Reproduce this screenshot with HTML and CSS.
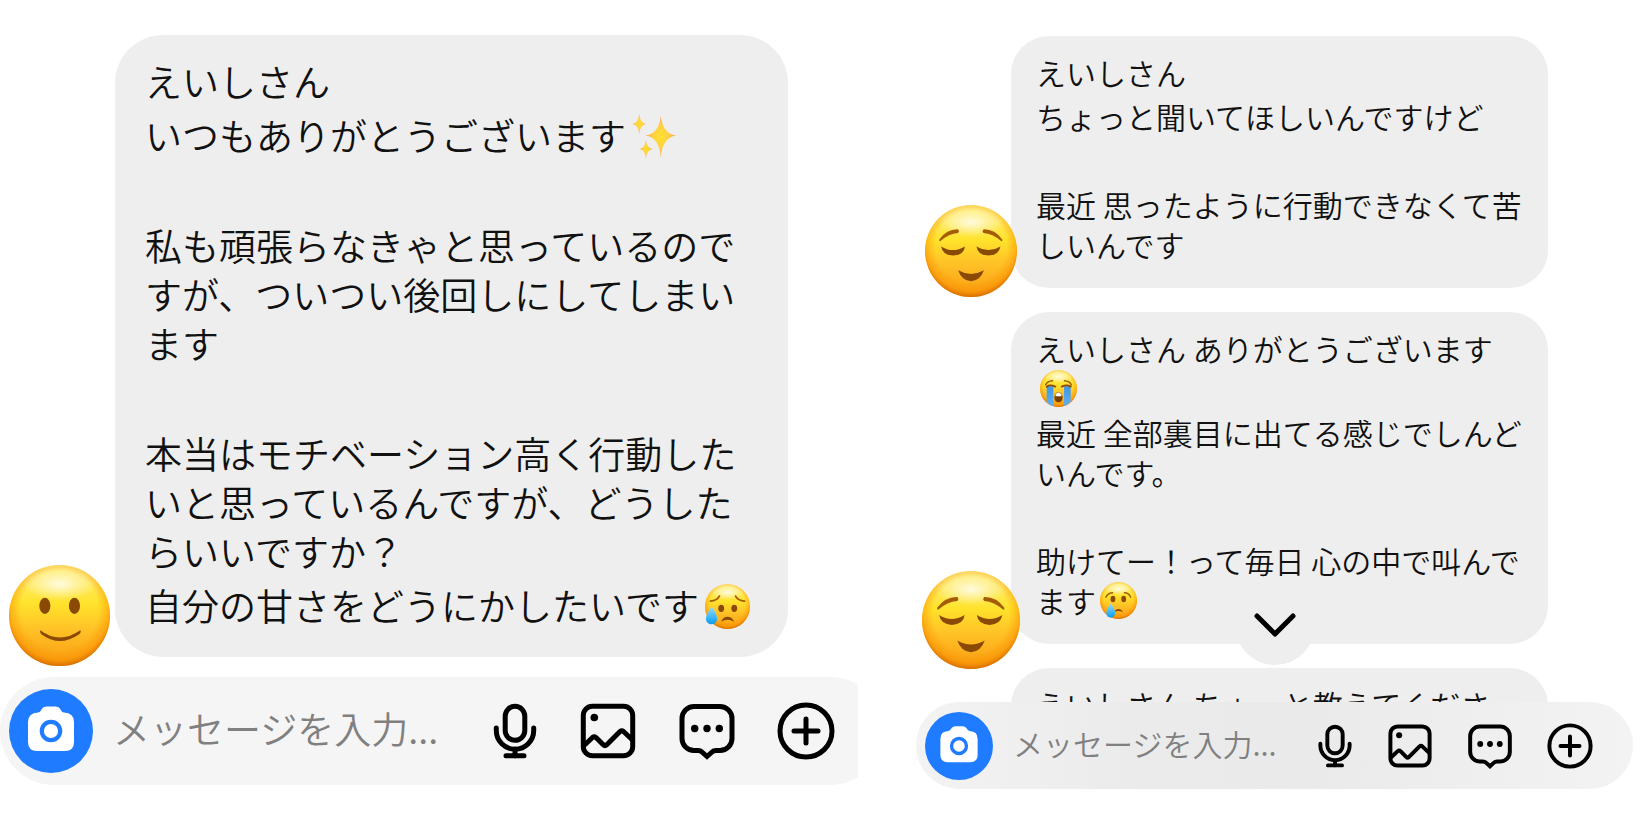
FILE: index.html
```html
<!DOCTYPE html>
<html lang="ja">
<head>
    <meta charset="UTF-8">
    <meta name="viewport" content="width=device-width, initial-scale=1.0">
    <title>メッセージ</title>
    <link rel="stylesheet" href="styles.css">
</head>
<body>
    <!-- shared icons -->
    <svg class="defs" aria-hidden="true">
        <defs>
            <linearGradient id="faceFill" x1="0" y1="0" x2="0" y2="1">
                <stop offset="0" stop-color="#fff08a"/>
                <stop offset="0.38" stop-color="#ffe32c"/>
                <stop offset="0.65" stop-color="#ffc026"/>
                <stop offset="1" stop-color="#f99c10"/>
            </linearGradient>
            <radialGradient id="faceEdge" cx="0.5" cy="0.45" r="0.55">
                <stop offset="0.7" stop-color="#fb9400" stop-opacity="0"/>
                <stop offset="0.88" stop-color="#fb9000" stop-opacity="0.5"/>
                <stop offset="1" stop-color="#d46c00" stop-opacity="0.95"/>
            </radialGradient>
            <radialGradient id="faceShine">
                <stop offset="0" stop-color="#fff" stop-opacity="0.8"/>
                <stop offset="1" stop-color="#fff" stop-opacity="0"/>
            </radialGradient>
            <linearGradient id="tear" x1="0" y1="0" x2="0" y2="1">
                <stop offset="0" stop-color="#8fe0ff"/>
                <stop offset="1" stop-color="#0a9cf0"/>
            </linearGradient>
            <linearGradient id="stream" x1="0" y1="0" x2="0" y2="1">
                <stop offset="0" stop-color="#3f97e6"/>
                <stop offset="1" stop-color="#5fb2f5"/>
            </linearGradient>
            <radialGradient id="starFill">
                <stop offset="0" stop-color="#ffe12e"/>
                <stop offset="0.5" stop-color="#ffd044"/>
                <stop offset="1" stop-color="#f9a75a"/>
            </radialGradient>
        </defs>
        <symbol id="face" viewBox="0 0 100 100">
            <circle cx="50" cy="50" r="50" fill="url(#faceFill)"/>
            <circle cx="50" cy="50" r="50" fill="url(#faceEdge)"/>
            <ellipse cx="50" cy="19" rx="36" ry="16" fill="url(#faceShine)"/>
        </symbol>
        <symbol id="smile" viewBox="0 0 100 100">
            <use href="#face"/>
            <ellipse cx="35.5" cy="40.5" rx="5.5" ry="8" fill="#8a4a06"/>
            <ellipse cx="64.8" cy="40.5" rx="5.5" ry="8" fill="#8a4a06"/>
            <path d="M31 64.5Q50 79 70.5 64.5Q72 66 69.500 68.500Q50 82 32 68.500Q30 66 31 64.500z" fill="#8a4a06"/>
        </symbol>
        <symbol id="relieved" viewBox="0 0 100 100">
            <use href="#face"/>
            <path d="M15.500 37.500Q24 26 36 26.500Q38 28.500 36 30.500Q26 31 16.500 39.500Q15 39.500 15.500 37.500zM84 37.500Q75.500 26 63.500 26.500Q61.500 28.500 63.500 30.500Q73.500 31 83 39.500Q84.500 39.500 84 37.500z" fill="#a45c08"/>
            <path d="M17.500 45Q30 53 43.500 45Q42.500 54.500 30.500 55Q19 54.500 17.500 45zM56 45Q69 53 82 45Q80.500 54.500 69 55Q57 54.500 56 45z" fill="#8a4a06"/>
            <path d="M36 71Q50 79 64 71Q60 82.500 50 83Q40 82.500 36 71z" fill="#8a4a06"/>
        </symbol>
        <symbol id="sadRelieved" viewBox="0 0 100 100">
            <use href="#face"/>
            <path d="M12 38Q27 37 32 27M68 27Q73 37 88 38" fill="none" stroke="#a45c08" stroke-width="4" stroke-linecap="round"/>
            <ellipse cx="36" cy="54" rx="6.500" ry="8" fill="#8a4a06"/>
            <ellipse cx="65" cy="54" rx="6.500" ry="8" fill="#8a4a06"/>
            <path d="M36 84Q40 73 50 73Q60 73 65 84Q50 75 36 84z" fill="#8a4a06"/>
            <path d="M15 50Q27 68 27 77A12.500 12.500 0 0 1 2 77Q2 68 15 50z" fill="url(#tear)"/>
        </symbol>
        <symbol id="cry" viewBox="0 0 100 100">
            <use href="#face"/>
            <path d="M16 41Q22 29 34 29M66 29Q78 29 83 41" fill="none" stroke="#a45c08" stroke-width="4" stroke-linecap="round"/>
            <ellipse cx="35" cy="46" rx="6.500" ry="9" fill="#8a4a06"/>
            <ellipse cx="64" cy="46" rx="6.500" ry="9" fill="#8a4a06"/>
            <path d="M38 82Q42 73 50 73Q58 73 62 82Q50 75 38 82z" fill="#8a4a06"/>
            <path d="M29 58Q41 75 41 84A12 12 0 0 1 17 84Q17 75 29 58z" fill="url(#tear)"/>
        </symbol>
        <symbol id="sob" viewBox="0 0 100 100">
            <use href="#face"/>
            <path d="M18 44H36V98Q26 94 18 87zM65 44H83V86Q76 93 65 97z" fill="url(#stream)"/>
            <path d="M15 40Q20 30 34 29M66 29Q80 30 85 40" fill="none" stroke="#a45c08" stroke-width="4" stroke-linecap="round"/>
            <path d="M18 45Q28 38 41 45M59 45Q72 38 83 45" fill="none" stroke="#8a4a06" stroke-width="5" stroke-linecap="round"/>
            <path d="M50 60C57 60 61 66 61 74C61 82 57 87 50 87S39 82 39 74C39 66 43 60 50 60z" fill="#7a3f04"/>
            <path d="M42 66Q50 56 58 66V71H42z" fill="#fff"/>
        </symbol>
        <symbol id="sparkles" viewBox="0 0 100 100">
            <path d="M64 3Q67 43 98 48Q67 53 64 97Q61 53 30 48Q61 43 64 3z" fill="url(#starFill)"/>
            <path d="M16 0Q18 20 31 22Q18 24 16 44Q14 24 1 22Q14 20 16 0z" fill="url(#starFill)"/>
            <path d="M31 58Q33 76 46 78Q33 80 31 99Q29 80 17 78Q29 76 31 58z" fill="url(#starFill)"/>
        </symbol>
        <symbol id="camera" viewBox="0 0 84 84">
            <path d="M29 23.500Q31.500 23 32.500 20.500Q34 17.500 38 17.500H46Q50 17.500 51.500 20.500Q52.500 23 55 23.500Q65 24 65 33V53Q65 62 56 62H28Q19 62 19 53V33Q19 24 29 23.500z" fill="#fff"/>
            <circle cx="42" cy="42" r="9.200" fill="none" stroke="#1f7bff" stroke-width="4.200"/>
        </symbol>
        <symbol id="mic" viewBox="0 0 46 58">
            <g fill="none" stroke="#000" stroke-width="5" stroke-linecap="round">
                <rect x="13.200" y="4.300" width="19.600" height="34" rx="9.800"/>
                <path d="M4.300 26v2.500a18.700 18.700 0 0 0 37.400 0V26M23 47v7M14 53.800h18"/>
            </g>
        </symbol>
        <symbol id="image" viewBox="0 0 58 58">
            <g fill="none" stroke="#000" stroke-width="5" stroke-linejoin="round">
                <rect x="4.300" y="4.300" width="49.400" height="49.400" rx="9"/>
                <path d="M5 43.500L13.500 35.500Q15.300 34 17 35.500L24.500 43Q26 44.500 27.500 43L41 29.500Q42.700 28 44.500 29.500L53.500 38"/>
            </g>
            <circle cx="15.300" cy="15.500" r="3.800"/>
        </symbol>
        <symbol id="chat" viewBox="0 0 58 58">
            <path d="M16 4.500H42A12 12 0 0 1 54 16.500V36.500A12 12 0 0 1 42 48.500H38Q35.500 48.500 34 50L29 54.500L24 50Q22.500 48.500 20 48.500H16A12 12 0 0 1 4 36.500V16.500A12 12 0 0 1 16 4.500z" fill="none" stroke="#000" stroke-width="5"/>
            <circle cx="16.700" cy="26.500" r="3.700"/>
            <circle cx="29" cy="26.500" r="3.700"/>
            <circle cx="41.300" cy="26.500" r="3.700"/>
        </symbol>
        <symbol id="plus" viewBox="0 0 58 58">
            <g fill="none" stroke="#000" stroke-width="5" stroke-linecap="round">
                <circle cx="29" cy="29" r="26"/>
                <path d="M29 17v24M17 29h24"/>
            </g>
        </symbol>
    </svg>

    <main class="screens">
        <section class="screen screen-large">
            <div class="message">
                <div class="avatar"><svg class="avatar-face" role="img" aria-label="🙂"><use href="#smile"/></svg></div>
                <div class="bubble">
                    <p>えいしさん</p>
                    <p>いつもありがとうございます<svg class="emoji" role="img" aria-label="✨"><use href="#sparkles"/></svg></p>
                    <p class="spaced">私も頑張らなきゃと思っているのですが、ついつい後回しにしてしまいます</p>
                    <p class="spaced">本当はモチベーション高く行動したいと思っているんですが、どうしたらいいですか？</p>
                    <p>自分の甘さをどうにかしたいです<svg class="emoji" role="img" aria-label="😥"><use href="#sadRelieved"/></svg></p>
                </div>
            </div>
            <form class="composer">
                <button type="button" class="camera" aria-label="カメラ"><svg><use href="#camera"/></svg></button>
                <input type="text" class="message-input" placeholder="メッセージを入力..." aria-label="メッセージを入力">
                <div class="tools">
                    <button type="button" class="tool tool-mic" aria-label="音声"><svg><use href="#mic"/></svg></button>
                    <button type="button" class="tool" aria-label="画像"><svg><use href="#image"/></svg></button>
                    <button type="button" class="tool" aria-label="返信"><svg><use href="#chat"/></svg></button>
                    <button type="button" class="tool" aria-label="追加"><svg><use href="#plus"/></svg></button>
                </div>
            </form>
        </section>

        <section class="screen screen-small">
            <div class="message">
                <div class="avatar"><svg class="avatar-face" role="img" aria-label="😌"><use href="#relieved"/></svg></div>
                <div class="bubble">
                    <p>えいしさん</p>
                    <p>ちょっと聞いてほしいんですけど</p>
                    <p class="spaced">最近 思ったように行動できなくて苦しいんです</p>
                </div>
            </div>
            <div class="message">
                <div class="avatar avatar-low"><svg class="avatar-face" role="img" aria-label="😌"><use href="#relieved"/></svg></div>
                <div class="bubble">
                    <p>えいしさん ありがとうございます<svg class="emoji" role="img" aria-label="😭"><use href="#sob"/></svg></p>
                    <p>最近 全部裏目に出てる感じでしんどいんです。</p>
                    <p class="spaced">助けてー！って毎日 心の中で叫んでます<svg class="emoji" role="img" aria-label="😢"><use href="#cry"/></svg></p>
                </div>
            </div>
            <!-- next message, cut off by the input bar -->
            <div class="message message-cut">
                <div class="avatar"></div>
                <div class="bubble">
                    <p>えいしさん ちょっと教えてくださ</p>
                </div>
            </div>
            <form class="composer">
                <button type="button" class="scroll-down" aria-label="最新へ">
                    <svg viewBox="0 0 80 80"><path d="M22 31L40 49L58 31" fill="none" stroke="#000" stroke-width="5" stroke-linecap="round" stroke-linejoin="round"/></svg>
                </button>
                <button type="button" class="camera" aria-label="カメラ"><svg><use href="#camera"/></svg></button>
                <input type="text" class="message-input" placeholder="メッセージを入力..." aria-label="メッセージを入力">
                <div class="tools">
                    <button type="button" class="tool tool-mic" aria-label="音声"><svg><use href="#mic"/></svg></button>
                    <button type="button" class="tool" aria-label="画像"><svg><use href="#image"/></svg></button>
                    <button type="button" class="tool" aria-label="返信"><svg><use href="#chat"/></svg></button>
                    <button type="button" class="tool" aria-label="追加"><svg><use href="#plus"/></svg></button>
                </div>
            </form>
        </section>
    </main>
</body>
</html>
```

FILE: styles.css
```css
body {
    margin: 0;
    background-color: #fff;
    color: #111;
    font-family: "Noto Sans CJK JP", sans-serif;
    font-weight: 350;
}

.defs {
    position: absolute;
    width: 0;
    height: 0;
}

.screens {
    display: grid;
    grid-template-columns: 52fr 48fr;
    align-items: start;
}

/* Sizes for the two screens */
.screen {
    box-sizing: border-box;
    min-width: 0;
    overflow: hidden;
    font-size: var(--text);
    line-height: var(--line);
}

.screen-large {
    --text: 37px;
    --line: 49px;
    --line-gap: 5px;
    --para-gap: 61px;
    --emoji: 45px;
    --face: 101px;
    --camera: 84px;
    --icon: 58px;
    --mic: 46px;
    padding: 35px 0;
}

.screen-small {
    --text: 30px;
    --line: 40px;
    --line-gap: 4px;
    --para-gap: 48px;
    --emoji: 37px;
    --face: 92px;
    --camera: 68px;
    --icon: 46px;
    --mic: 36px;
    padding: 36px 0;
}

/* Messages */
.message {
    display: flex;
    align-items: flex-end;
}

.screen-large .message {
    padding: 0 70px 0 9px;
    margin-bottom: 20px;
}

.screen-small .message {
    padding: 0 102px 0 72px;
    margin-bottom: 24px;
}

.avatar {
    display: flex;
    flex-shrink: 0;
    justify-content: center;
    position: relative;
    z-index: 1;
    width: 81px;
    margin-bottom: -9px;
}

.screen-large .avatar {
    width: 101px;
    margin-right: 5px;
}

.avatar-low {
    --face: 98px;
    margin-bottom: -25px;
}

.avatar-face {
    flex-shrink: 0;
    width: var(--face);
    height: var(--face);
}

.bubble {
    flex: 1;
    background-color: #eee;
    border-radius: 38px;
    padding: 16px 24px 24px 25px;
}

.screen-large .bubble {
    border-radius: 48px;
    padding: 22px 30px 27px;
}

.bubble p {
    margin: 0;
}

.bubble p + p {
    margin-top: var(--line-gap);
}

.bubble p.spaced {
    margin-top: var(--para-gap);
}

.emoji {
    width: var(--emoji);
    height: var(--emoji);
    margin-left: 4px;
    vertical-align: -8px;
}

.screen-large .emoji {
    margin-left: 6px;
}

.screen-small .emoji {
    vertical-align: -6px;
}

.screen-small .message-cut {
    align-items: flex-start;
    height: 34px;
    margin-bottom: 0;
    overflow: hidden;
}

/* Input bar */
.composer {
    display: flex;
    align-items: center;
    box-sizing: border-box;
    position: relative;
    background-color: #f5f5f5;
    border-radius: 54px;
}

.screen-large .composer {
    width: 103%;
    padding: 12px 49px 12px 9px;
}

.screen-small .composer {
    margin: 0 17px 0 58px;
    padding: 10px 40px 9px 9px;
    background-image: linear-gradient(90deg, #f3f3f3, #ebebeb 30%, #eaeaea 55%, #f3f3f3);
}

button {
    flex-shrink: 0;
    padding: 0;
    border: none;
    background: none;
    cursor: pointer;
}

button svg {
    display: block;
    width: 100%;
    height: 100%;
}

.camera {
    width: var(--camera);
    height: var(--camera);
    border-radius: 50%;
    background-color: #1f7bff;
}

.message-input {
    flex: 1;
    min-width: 0;
    padding: 0 0 6px;
    margin-left: 20px;
    border: none;
    outline: none;
    background: none;
    color: #111;
    font-family: inherit;
    font-size: var(--text);
    font-weight: 350;
    line-height: var(--line);
}

.message-input::placeholder {
    color: #808080;
    opacity: 1;
}

.tools {
    display: flex;
    gap: 41px;
}

.screen-small .tools {
    gap: 34px;
}

.tool {
    width: var(--icon);
    height: var(--icon);
}

.tool-mic {
    width: var(--mic);
}

.scroll-down {
    position: absolute;
    left: 50%;
    bottom: calc(100% + 37px);
    width: 80px;
    height: 80px;
    margin-left: -40px;
    border-radius: 50%;
    background-color: #eee;
}
```
